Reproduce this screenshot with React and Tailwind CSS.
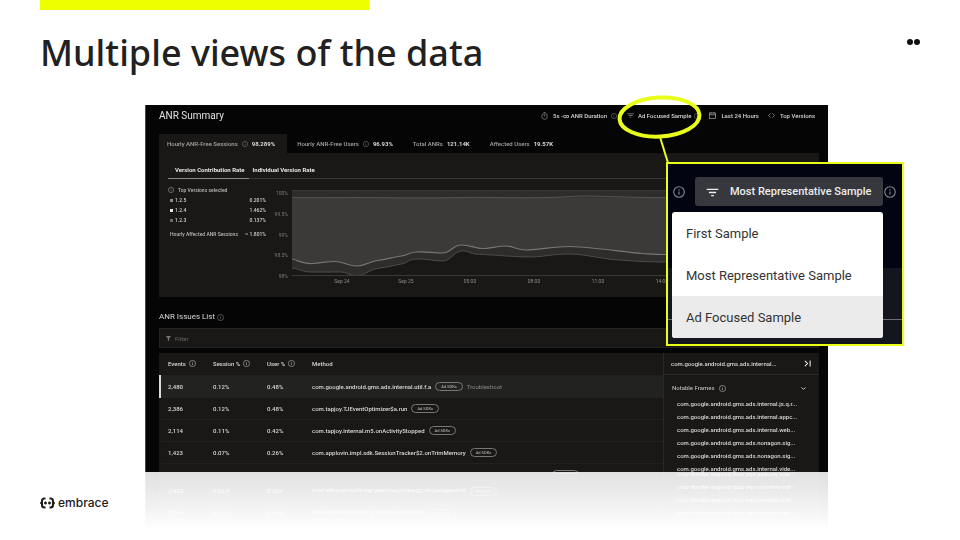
import React, { useState } from 'react';
import { ChevronDown } from 'lucide-react';

const summaryTabs = [
    { label: 'Hourly ANR-Free Sessions', value: '98.289%', info: true },
    { label: 'Hourly ANR-Free Users', value: '96.93%', info: true },
    { label: 'Total ANRs', value: '121.14K' },
    { label: 'Affected Users', value: '19.57K' },
];

const versions = [
    { name: '1.2.5', rate: '0.201%', color: 'bg-[#8a8a8a]' },
    { name: '1.2.4', rate: '1.462%', color: 'bg-[#e4e4e4]' },
    { name: '1.2.3', rate: '0.137%', color: 'bg-[#6a6a6a]' },
];

const yTicks = ['100%', '99.5%', '99%', '98.5%', '98%'];
const xTicks = ['Sep 24', 'Sep 25', '05:00', '08:00', '11:00', '14:00'];

const issues = [
    { events: '2,480', session: '0.12%', user: '0.48%', method: 'com.google.android.gms.ads.internal.util.f.a', troubleshoot: true },
    { events: '2,386', session: '0.12%', user: '0.48%', method: 'com.tapjoy.TJEventOptimizer$a.run' },
    { events: '2,114', session: '0.11%', user: '0.42%', method: 'com.tapjoy.internal.m5.onActivityStopped' },
    { events: '1,423', session: '0.07%', user: '0.26%', method: 'com.applovin.impl.sdk.SessionTracker$2.onTrimMemory' },
    { method: 'com.google.android.gms.ads.internal.webview.ui.AdWebViewClient.onPageLoadedView' },
];

const frames = [
    'com.google.android.gms.ads.internal.js.q.r...',
    'com.google.android.gms.ads.internal.appc...',
    'com.google.android.gms.ads.internal.web...',
    'com.google.android.gms.ads.nonagon.sig...',
    'com.google.android.gms.ads.nonagon.sig...',
    'com.google.android.gms.ads.internal.vide...',
];

const samples = ['First Sample', 'Most Representative Sample', 'Ad Focused Sample'];

function InfoIcon({ className = 'size-[7px] text-[#b0b0b0]' }) {
    return (
        <svg viewBox="0 0 12 12" fill="none" className={`shrink-0 ${className}`} aria-hidden="true">
            <circle cx="6" cy="6" r="5.3" stroke="currentColor" strokeWidth="1.1" />
            <path d="M6 5.4v3.2M6 3.2v1.2" stroke="currentColor" strokeWidth="1.2" />
        </svg>
    );
}

function FilterIcon({ className }) {
    return (
        <svg viewBox="0 0 14 10" fill="none" stroke="currentColor" className={`shrink-0 ${className}`} aria-hidden="true">
            <path d="M0.5 1.5h13M3 5h8M5.5 8.5h3" strokeWidth="1.6" />
        </svg>
    );
}

function Toolbar() {
    return (
        <div className="flex items-center text-[6px] font-medium text-[#d6d6d6]">
            <button type="button" className="flex items-center gap-[5px]">
                <svg viewBox="0 0 14 16" fill="none" stroke="#8c8c8c" className="h-2 w-[7px]" aria-hidden="true">
                    <circle cx="7" cy="9" r="5.6" strokeWidth="1.4" />
                    <path d="M7 9V5.5M5 1h4M11 3.5l1.5 1.5" strokeWidth="1.4" />
                </svg>
                5s -∞ ANR Duration
            </button>
            <InfoIcon className="ml-1 size-[6px] text-[#777]" />
            <button type="button" className="ml-[10px] flex items-center gap-1">
                <FilterIcon className="h-[5px] w-[7px] text-[#8c8c8c]" />
                Ad Focused Sample
            </button>
            <InfoIcon className="ml-[3px] size-[6px] text-[#777]" />
            <button type="button" className="ml-[9px] flex items-center gap-[5px]">
                <svg viewBox="0 0 14 14" fill="none" stroke="#a8a8a8" className="size-[7px]" aria-hidden="true">
                    <rect x="1" y="2" width="12" height="11" strokeWidth="1.4" />
                    <path d="M1 5.5h12M4 0v3M10 0v3" strokeWidth="1.4" />
                </svg>
                Last 24 Hours
            </button>
            <button type="button" className="ml-[9px] flex items-center gap-[5px]">
                <svg viewBox="0 0 14 10" fill="none" stroke="#a8a8a8" className="h-[5px] w-[7px]" aria-hidden="true">
                    <path d="M5 1L1 5l4 4M9 1l4 4-4 4" strokeWidth="1.4" />
                </svg>
                Top Versions
            </button>
        </div>
    );
}

function RateChart() {
    return (
        <div className="flex min-w-0 flex-1">
            <div className="-mt-px flex h-[91px] w-[26px] flex-col justify-between pr-1 text-right text-[5px] leading-[8px] text-[#7a7a7a]">
                {yTicks.map((tick) => (
                    <span key={tick}>{tick}</span>
                ))}
            </div>
            <div className="min-w-0 flex-1">
                <svg viewBox="0 0 520 86" preserveAspectRatio="none" fill="none" className="h-[86px] w-full" role="img" aria-label="ANR-free session rate by version">
                    <path d="M0 0H520V73L374 72C356 72 345 71 328 70S296 64 278 64S254 67 238 67S206 64 191 64.500S178 61 171 61S160 71 151 71S135 68.500 125 69S116 73 110 74S96 77 86 78.500S74 85.500 65 85.500S56 82 48 82S30 82.500 20 82S8 79 0 78Z" fill="#2e2d2c" />
                    <path d="M0 7.500H520V65L374 64.500C366 64.500 360 64 351 63.500S320 60 310 59S290 56.500 278 56.500S246 60 235 60S222 56 214.500 56S198 58.500 191 58.500S178 55 170 55S160 63 151 63S134 61.500 125 62S118 65 110 66S96 69 86 70.500S74 76 65 76S52 71.500 43 71.500S30 73 20 73.500S8 71 0 69Z" fill="#3b3a39" />
                    <path d="M0 7.500C20 8 40 7.500 65 7.500S100 8 130 8S175 7 200 7.500S260 8 280 6.500S340 8 374 7.500H520" stroke="#555453" />
                    <path d="M0 69C8 71 10 74 20 73.500S34 71.500 43 71.500S56 76 65 76S76 72 86 70.500S102 67 110 66S116 62.500 125 62S142 63 151 63S161 55 170 55S184 58.500 191 58.500S207 56 214.500 56S225 60 235 60S265 56.500 278 56.500S300 58 310 59S342 63 351 63.500S366 64.500 374 64.500L520 65" stroke="#777674" strokeWidth="1.2" />
                    <path d="M0 78C8 79 10 82 20 82S40 82 48 82S56 85.500 65 85.500S76 80 86 78.500S104 75 110 74S116 69.500 125 69S142 71 151 71S162 61 171 61S176 64 191 64.500S224 67 238 67S262 64 278 64S311 69 328 70S356 72 374 72L520 73" stroke="#4c4b4a" />
                    <path d="M0 0.500H520M0 85.500H520" stroke="#3a3938" />
                </svg>
                <div className="flex pl-[18px] pt-[2px] text-[5px] leading-[6px] text-[#8a8a8a]">
                    {xTicks.map((tick) => (
                        <span key={tick} className="w-16 shrink-0 text-center">{tick}</span>
                    ))}
                </div>
            </div>
        </div>
    );
}

function SummaryCard() {
    return (
        <section className="bg-[#191817] px-[9px] pb-[13px] pt-3">
            <div className="flex gap-1 border-b border-[#383736] text-[6px] font-bold leading-[10px] text-[#e4e4e4]">
                <button type="button" className="-mb-px border-b border-[#888] pb-[3px] pl-[7px] pr-1">Version Contribution Rate</button>
                <button type="button" className="pb-[3px]">Individual Version Rate</button>
            </div>
            <div className="flex pt-[11px]">
                <div className="w-[98px] shrink-0 text-[5px] font-medium leading-[10px] text-[#b8b8b8]">
                    <p className="-mt-[5px] flex items-center gap-1">
                        <InfoIcon className="size-[6px] text-[#999]" />
                        Top Versions selected
                    </p>
                    {versions.map((version) => (
                        <p key={version.name} className="flex items-center gap-[2px] pl-[2px] text-[#d0d0d0]">
                            <span className={`size-[3px] ${version.color}`} />
                            {version.name}
                            <span className="ml-auto">{version.rate}</span>
                        </p>
                    ))}
                    <p className="mt-1 flex justify-between pl-[2px]">
                        <span>Hourly Affected ANR Sessions</span>
                        <span className="text-[#d0d0d0]">~ 1.801%</span>
                    </p>
                </div>
                <RateChart />
            </div>
        </section>
    );
}

function IssuesTable() {
    return (
        <table className="h-fit w-full table-fixed border-collapse whitespace-nowrap text-left text-[6px] font-medium text-[#d8d8d8]">
            <thead>
                <tr className="h-[22px] border-b border-[#222120]">
                    <th className="w-[53px] py-0 pl-2 font-medium">
                        <span className="flex items-center gap-[3px]">Events <InfoIcon /></span>
                    </th>
                    <th className="w-[54px] p-0 font-medium">
                        <span className="flex items-center gap-[3px]">Session % <InfoIcon /></span>
                    </th>
                    <th className="w-[45px] p-0 font-medium">
                        <span className="flex items-center gap-[3px]">User % <InfoIcon /></span>
                    </th>
                    <th className="p-0 font-medium">Method</th>
                </tr>
            </thead>
            <tbody>
                {issues.map((issue) => (
                    <tr key={issue.method} className={`h-[22px] border-b border-[#222120] ${issue.troubleshoot ? 'bg-[#222221]' : ''}`}>
                        <td className={`border-l-2 py-0 pl-[7px] ${issue.troubleshoot ? 'border-l-[#dcdcdc]' : 'border-l-transparent'}`}>{issue.events}</td>
                        <td className="p-0">{issue.session}</td>
                        <td className="p-0">{issue.user}</td>
                        <td className="p-0">
                            <span className="flex items-center gap-1">
                                {issue.method}
                                <span className="rounded-full border border-[#777] px-[5px] text-[4px] leading-[7px] text-[#a8a8a8]">Ad SDKs</span>
                                {issue.troubleshoot && <a href="#troubleshoot" className="font-normal text-[#8a8a8a]">Troubleshoot</a>}
                            </span>
                        </td>
                    </tr>
                ))}
            </tbody>
        </table>
    );
}

function FramesPanel() {
    return (
        <aside className="w-[156px] shrink-0 border-l border-[#2a2928] text-[6px] font-medium text-[#d8d8d8]">
            <div className="flex h-[22px] items-center justify-between border-b border-[#2a2928] pl-[7px] pr-2">
                <span>com.google.android.gms.ads.internal...</span>
                <button type="button" aria-label="Collapse panel">
                    <svg viewBox="0 0 8 8" fill="none" stroke="#eee" className="size-[7px]" aria-hidden="true">
                        <path d="M1 1l3 3-3 3M7 0.500v7" strokeWidth="1.2" />
                    </svg>
                </button>
            </div>
            <button type="button" className="flex w-full items-center gap-1 pb-1 pl-2 pr-3 pt-2 leading-[10px] text-[#b4b4b4]">
                Notable Frames <InfoIcon />
                <ChevronDown className="ml-auto size-[7px] text-[#ddd]" strokeWidth={3} />
            </button>
            <ul className="pl-[13px] leading-[13px]">
                {frames.map((frame, i) => (
                    <li key={i} className="whitespace-nowrap">{frame}</li>
                ))}
            </ul>
        </aside>
    );
}

function Dashboard() {
    return (
        <div className="h-[367px] overflow-hidden border-l border-[#4a4a4a] bg-[#050505] pl-[13px] pr-[9px] [-webkit-box-reflect:below_0px_linear-gradient(to_bottom,transparent_84%,rgba(0,0,0,0.13))]">
            <div className="flex h-[29px] items-start justify-between pr-1">
                <h2 className="text-[10px] leading-[21px] text-[#e4e4e4]">ANR Summary</h2>
                <div className="flex h-[21px] items-center">
                    <Toolbar />
                </div>
            </div>
            <div className="flex text-[6px] font-medium text-[#a4a4a4]">
                {summaryTabs.map((tab, i) => (
                    <button key={tab.label} type="button" className={`flex h-[19px] items-center gap-1 pl-2 pr-3 ${i === 0 ? 'mr-[2px] bg-[#191817]' : ''}`}>
                        {tab.label}
                        {tab.info && <InfoIcon className="size-[6px] text-[#777]" />}
                        <span className="font-bold text-[#d8d8d8]">{tab.value}</span>
                    </button>
                ))}
            </div>
            <SummaryCard />
            <h3 className="mt-3 flex items-center gap-[2px] text-[8px] leading-[16px] text-[#d8d8d8]">
                ANR Issues List <InfoIcon className="size-[7px] text-[#777]" />
            </h3>
            <label className="mt-[3px] flex h-5 items-center gap-1 border border-[#242322] bg-[#191817] px-[6px]">
                <svg viewBox="0 0 8 8" className="size-[5px] fill-[#777]" aria-hidden="true">
                    <path d="M0 0h8L5 4v4L3 7V4z" />
                </svg>
                <input type="text" placeholder="Filter" aria-label="Filter" className="flex-1 bg-transparent text-[6px] text-[#d8d8d8] outline-none placeholder:text-[#666]" />
            </label>
            <div className="mt-[5px] flex bg-[#191817]">
                <div className="min-w-0 flex-1">
                    <IssuesTable />
                </div>
                <FramesPanel />
            </div>
        </div>
    );
}

function SampleCallout() {
    const [active, setActive] = useState('Ad Focused Sample');

    return (
        <div className="absolute -right-[76px] top-[57px] w-[238px] border-2 border-[#e9ff1a] bg-[linear-gradient(#020511_0_104px,#14161f_104px_155px,#6d6e74_155px_156px,#14161f_156px)] pb-[6px] pl-1 pt-[13px]">
            <div className="flex items-center text-[#85868c]">
                <InfoIcon className="ml-px size-3" />
                <button type="button" className="ml-[10px] flex h-[29px] w-[188px] items-center gap-[11px] rounded-[3px] bg-[#37383d] pl-[11px] pt-px text-[11px] font-medium whitespace-nowrap text-[#ececec]">
                    <FilterIcon className="h-[9px] w-[13px]" />
                    Most Representative Sample
                </button>
                <InfoIcon className="ml-px size-3" />
            </div>
            <div role="listbox" aria-label="Sample" className="mt-[6px] w-[211px] overflow-hidden rounded-[3px] bg-white">
                {samples.map((sample) => (
                    <button
                        key={sample}
                        type="button"
                        role="option"
                        aria-selected={sample === active}
                        onClick={() => setActive(sample)}
                        className={`block h-[42px] w-full px-[14px] pt-[2px] text-left text-[13px] text-[#333] ${sample === active ? 'bg-[#ebebeb]' : ''}`}
                    >
                        {sample}
                    </button>
                ))}
            </div>
        </div>
    );
}

export default function App() {
    return (
        <div className="min-h-screen overflow-hidden bg-white font-['Roboto','Liberation_Sans',sans-serif]">
            <div className="ml-10 h-[10px] w-[329px] bg-[#eeff00]" />
            <header className="flex h-[95px] items-start justify-between px-10 pt-[19px]">
                <h1 className="font-['Noto_Sans','Liberation_Sans',sans-serif] text-[36px] font-medium leading-[48px] text-[#212121]">
                    Multiple views of the data
                </h1>
                <div className="flex gap-px pt-[10px]">
                    <span className="size-[6px] rounded-full bg-[#111]" />
                    <span className="size-[6px] rounded-full bg-[#111]" />
                </div>
            </header>

            <main className="relative ml-[145px] mr-[132px]">
                <Dashboard />
                <svg viewBox="0 0 92 72" fill="none" stroke="#e9ff1a" className="absolute -top-3 right-[122px] h-[72px] w-[92px]" aria-hidden="true">
                    <ellipse cx="45.500" cy="24" rx="40" ry="19.500" strokeWidth="4" transform="rotate(-3 46 24)" />
                    <path d="M46 44L54 70" strokeWidth="2" />
                </svg>
                <SampleCallout />
            </main>

            <footer className="flex items-center gap-[3px] px-10 pt-[22px]">
                <svg viewBox="0 0 30 24" fill="none" stroke="#1c1c1c" className="h-3 w-[15px]" aria-hidden="true">
                    <path d="M11 3H9Q4 3 4 8V16Q4 21 9 21H11M19 3H21Q26 3 26 8V16Q26 21 21 21H19" strokeWidth="4.200" />
                    <path d="M8 12h6M16 12h6M11 9v6M19 9v6" strokeWidth="2.800" />
                    <path d="M0 12h4M26 12h4" strokeWidth="3" />
                </svg>
                <span className="font-['Inter','Liberation_Sans',sans-serif] text-[12px] font-medium leading-[18px] text-[#1c1c1c]">embrace</span>
            </footer>
        </div>
    );
}
